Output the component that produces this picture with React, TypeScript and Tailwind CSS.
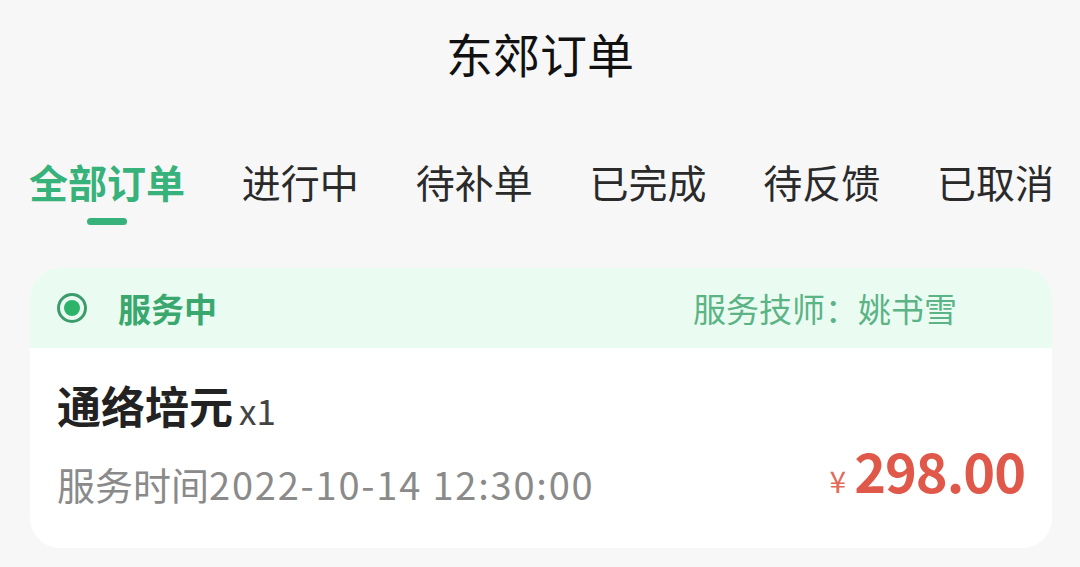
import React from "react"

const tabs = ["全部订单", "进行中", "待补单", "已完成", "待反馈", "已取消"]

export default function App() {
    const font = { fontFamily: '"Noto Sans CJK SC", "Noto Sans", sans-serif' }

    return (
        <div className="w-[1080px] h-[567px] bg-[#f7f7f7] overflow-hidden" style={font}>
            {/* 标题 */}
            <div className="h-[104px] flex items-center justify-center">
                <h1 className="text-[47px] leading-none text-[#111] font-normal">东郊订单</h1>
            </div>

            {/* 标签栏 */}
            <div className="flex gap-[56.8px] pl-[29px] mt-[58px]">
                {tabs.map((tab, index) => (
                    <div key={tab} className="flex flex-col items-center">
                        <span
                            className={`text-[39px] leading-none ${index === 0 ? "font-bold text-[#36b27a]" : "text-[#2a2a2a]"}`}
                        >
                            {tab}
                        </span>
                        {index === 0 ? (
                            <div className="mt-[17px] w-[40px] h-[7px] rounded-full bg-[#36b27a]" />
                        ) : (
                            <div className="mt-[17px] h-[7px]" />
                        )}
                    </div>
                ))}
            </div>

            {/* 订单卡片 */}
            <div className="mx-[30px] mt-[43px] w-[1022px] rounded-[30px] overflow-hidden bg-white">
                <div className="h-[80px] bg-[#eafcf1] flex items-center justify-between pl-[27px] pr-[95px]">
                    <div className="flex items-center">
                        <div className="w-[30px] h-[30px] rounded-full border-[3px] border-[#3d9c6c] flex items-center justify-center">
                            <div className="w-[16px] h-[16px] rounded-full bg-[#2db46a]" />
                        </div>
                        <span className="ml-[31px] text-[33px] leading-none font-bold text-[#3aa86e]">服务中</span>
                    </div>
                    <span className="text-[33px] leading-none text-[#5bb386]">服务技师：姚书雪</span>
                </div>

                <div className="h-[200px] px-[27px] pt-[35px]">
                    <div className="flex items-end">
                        <span className="text-[44px] leading-none font-bold text-[#222]">通络培元</span>
                        <span className="ml-[6px] text-[35px] leading-none text-[#444]">x1</span>
                    </div>
                    <div className="mt-[16px] flex items-start justify-between">
                        <span className="mt-[22px] text-[38px] leading-none text-[#8a8a8a]">
                            服务时间<span className="tracking-[1.8px]">2022-10-14 12:30:00</span>
                        </span>
                        <div className="flex items-baseline text-[#e05849]">
                            <span className="text-[30px] leading-none mr-[8px] text-[#e26a5b]">¥</span>
                            <span className="text-[54px] leading-none font-bold tracking-[-1px]">298.00</span>
                        </div>
                    </div>
                </div>
            </div>
        </div>
    )
}
